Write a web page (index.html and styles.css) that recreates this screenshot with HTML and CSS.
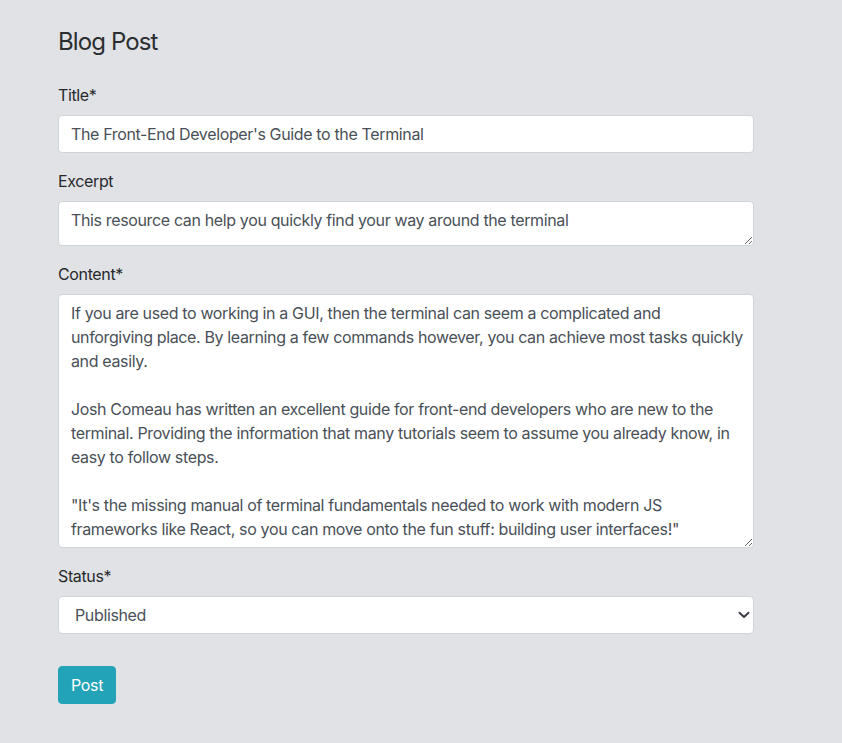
FILE: index.html
```html
<!DOCTYPE html>
<html lang="en">
<head>
<meta charset="utf-8">
<title>Blog Post</title>
<link rel="stylesheet" href="styles.css">
</head>
<body>
<main class="container">
  <h4 class="page-title">Blog Post</h4>
  <form class="post-form">
    <div class="form-group">
      <label class="form-label" for="title">Title*</label>
      <input class="form-control" id="title" type="text" value="The Front-End Developer's Guide to the Terminal">
    </div>
    <div class="form-group">
      <label class="form-label" for="excerpt">Excerpt</label>
      <textarea class="form-control excerpt" id="excerpt">This resource can help you quickly find your way around the terminal</textarea>
    </div>
    <div class="form-group">
      <label class="form-label" for="content">Content*</label>
      <textarea class="form-control content" id="content">If you are used to working in a GUI, then the terminal can seem a complicated and unforgiving place. By learning a few commands however, you can achieve most tasks quickly and easily.

Josh Comeau has written an excellent guide for front-end developers who are new to the terminal. Providing the information that many tutorials seem to assume you already know, in easy to follow steps.

"It's the missing manual of terminal fundamentals needed to work with modern JS frameworks like React, so you can move onto the fun stuff: building user interfaces!"</textarea>
    </div>
    <div class="form-group">
      <label class="form-label" for="status">Status*</label>
      <div class="select-wrap">
        <select class="form-control select" id="status">
          <option>Published</option>
          <option>Draft</option>
        </select>
        <svg class="chevron" width="12" height="8" viewBox="0 0 12 8" aria-hidden="true"><path d="M1.5 1.8L6 6l4.5-4.2" fill="none" stroke="#3c4046" stroke-width="2" stroke-linecap="round" stroke-linejoin="round"/></svg>
      </div>
    </div>
    <button class="btn-post" type="button">Post</button>
  </form>
</main>
</body>
</html>
```
FILE: styles.css
```css
* { box-sizing: border-box; }
html, body {
  margin: 0;
  padding: 0;
  background: #e1e2e5;
}
body {
  font-family: Inter, "Liberation Sans", Arial, sans-serif;
  font-size: 16px;
  line-height: 1.5;
  letter-spacing: -0.36px;
  color: #212529;
}
.container {
  width: 696px;
  margin-left: 58px;
  padding-top: 28px;
}
.page-title {
  margin: 0 0 26px;
  font-size: 24px;
  font-weight: 400;
  line-height: 1.2;
  letter-spacing: -0.9px;
  color: #2b2e31;
}
.form-group {
  margin-bottom: 16px;
}
.form-label {
  display: block;
  margin-bottom: 8px;
  line-height: 24px;
  color: #26292c;
}
.form-control {
  display: block;
  width: 100%;
  height: 38px;
  padding: 6px 12px;
  font-family: inherit;
  font-size: 16px;
  line-height: 24px;
  letter-spacing: -0.36px;
  color: #495057;
  background: #fff;
  border: 1px solid #ced4da;
  border-radius: 4px;
  margin: 0;
  outline: none;
}
textarea.form-control {
  resize: vertical;
  overflow: auto;
}
.excerpt { height: 45px; }
.content {
  height: 254px;
  padding-right: 8px;
}
.select-wrap { position: relative; }
.select {
  appearance: none;
  -webkit-appearance: none;
  padding-left: 16px;
}
.chevron {
  position: absolute;
  right: 4px;
  top: 15px;
  pointer-events: none;
}
.btn-post {
  margin-top: 16px;
  height: 38px;
  width: 58px;
  padding: 0;
  font-family: inherit;
  font-size: 16px;
  line-height: 24px;
  letter-spacing: -0.32px;
  color: #fff;
  background: #22a3b8;
  border: 1px solid #22a3b8;
  border-radius: 4px;
}
```
